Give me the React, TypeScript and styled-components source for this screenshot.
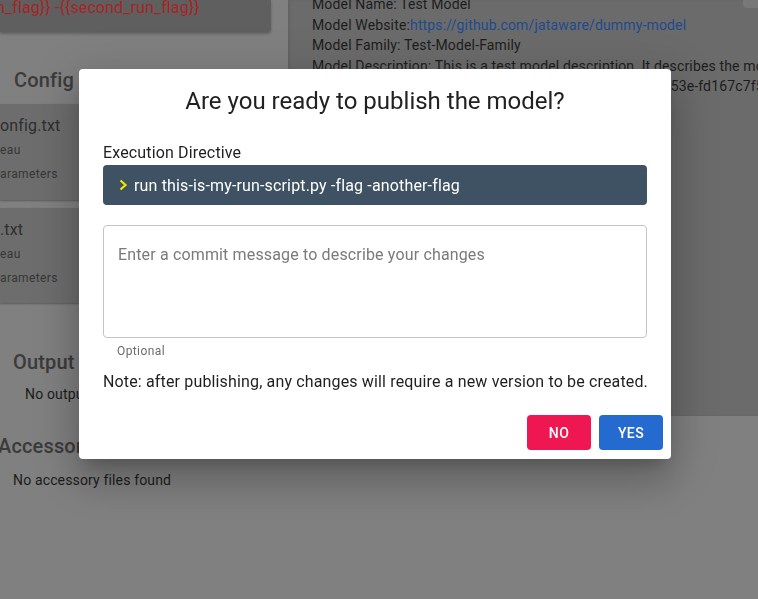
import React from "react";
import styled, { createGlobalStyle } from "styled-components";

const GlobalStyle = createGlobalStyle`
  html, body { margin: 0; padding: 0; }
  body {
    background: #808080;
    font-family: Roboto, "Liberation Sans", Arial, sans-serif;
    overflow: hidden;
  }
  * { box-sizing: border-box; }
`;

const Page = styled.div`
  display: grid;
  grid-template-columns: 288px 1fr;
  width: 758px;
  height: 599px;
  overflow: hidden;
`;

const LeftColumn = styled.div`
  display: flex;
  flex-direction: column;
  min-width: 0;
`;

const TopCard = styled.div`
  width: 271px;
  height: 32px;
  background: #5f5f5f;
  border-bottom-right-radius: 4px;
  box-shadow: 0 2px 3px rgba(0, 0, 0, 0.25);
  overflow: hidden;
`;

const FlagText = styled.div`
  margin: -4px 0 0 -4px;
  font-size: 16px;
  line-height: 24px;
  letter-spacing: 0.1px;
  color: #a82424;
  white-space: nowrap;
`;

const Heading = styled.div<{ $top: number; $indent: number }>`
  margin-top: ${(p) => p.$top}px;
  margin-left: ${(p) => p.$indent}px;
  font-size: 20px;
  font-weight: 500;
  line-height: 28px;
  letter-spacing: 0.15px;
  color: #3b3b3b;
  white-space: nowrap;
`;

const CardList = styled.div`
  display: flex;
  flex-direction: column;
  gap: 8px;
  margin-top: 10px;
`;

const FileCard = styled.div<{ $h: number }>`
  width: 271px;
  height: ${(p) => p.$h}px;
  background: #6d6d6d;
  border-radius: 0 4px 4px 0;
  box-shadow: 0 1px 2px rgba(0, 0, 0, 0.3);
  padding-top: 10px;
`;

const FileName = styled.div`
  font-size: 16px;
  line-height: 24px;
  letter-spacing: 0.15px;
  color: #2f2f2f;
`;

const FileMeta = styled.div`
  font-size: 12px;
  line-height: 24px;
  letter-spacing: 0.4px;
  color: #363636;
`;

const Body = styled.div<{ $top: number; $indent: number }>`
  margin-top: ${(p) => p.$top}px;
  padding-left: ${(p) => p.$indent}px;
  font-size: 14px;
  line-height: 20px;
  letter-spacing: 0.15px;
  color: #1c1c1c;
  white-space: nowrap;
`;

const RightPanel = styled.div`
  height: 416px;
  background: #6b6b6b;
  box-shadow: inset 2px 0 3px rgba(0, 0, 0, 0.08);
  display: grid;
  grid-template-columns: minmax(0, 1fr);
  grid-template-rows: auto;
  padding-left: 24px;
  overflow: hidden;
  & > * {
    grid-area: 1 / 1;
  }
`;

const InfoList = styled.div`
  margin-top: -6px;
  display: flex;
  flex-direction: column;
  min-width: 0;
  overflow: hidden;
`;

const InfoLine = styled.div`
  font-size: 14px;
  line-height: 20.5px;
  letter-spacing: 0.15px;
  color: #1d1d1d;
  white-space: nowrap;
`;

const Link = styled.span`
  color: #1e4a8e;
`;

const CornerButton = styled.div`
  justify-self: end;
  align-self: start;
  width: 15px;
  height: 8px;
  background: #787878;
  border-bottom-left-radius: 4px;
`;

const ModalLayer = styled.div`
  position: fixed;
  inset: 0;
  display: flex;
  align-items: flex-start;
  justify-content: flex-start;
  padding: 69px 0 0 79px;
`;

const Dialog = styled.div`
  width: 592px;
  height: 390px;
  background: #ffffff;
  border-radius: 4px;
  box-shadow: 0px 11px 15px -7px rgba(0, 0, 0, 0.2),
    0px 24px 38px 3px rgba(0, 0, 0, 0.14), 0px 9px 46px 8px rgba(0, 0, 0, 0.12);
  display: flex;
  flex-direction: column;
  overflow: hidden;
`;

const Title = styled.h2`
  margin: 0;
  padding: 16px 24px;
  font-size: 24px;
  font-weight: 400;
  line-height: 32px;
  text-align: center;
  color: #212121;
`;

const Content = styled.div`
  padding: 8px 24px 0;
  display: flex;
  flex-direction: column;
`;

const Label = styled.div`
  font-size: 16px;
  line-height: 24px;
  letter-spacing: 0.15px;
  color: #1f1f1f;
`;

const CodeBox = styled.div`
  height: 40px;
  border-radius: 4px;
  background: #3e5263;
  display: flex;
  align-items: center;
  gap: 6px;
  padding-left: 16px;
  color: #ffffff;
  font-size: 16px;
  letter-spacing: 0.15px;
`;

const Prompt = styled.svg`
  width: 9px;
  height: 12px;
  flex: none;
`;

const TextArea = styled.textarea`
  margin-top: 20px;
  height: 113px;
  resize: none;
  border: 1px solid #c4c4c4;
  border-radius: 4px;
  padding: 17px 14px;
  font-family: Roboto, "Liberation Sans", Arial, sans-serif;
  font-size: 16px;
  line-height: 23px;
  letter-spacing: 0.15px;
  color: #222;
  outline: none;
  &::placeholder {
    color: #7a7a7a;
  }
`;

const Helper = styled.div`
  margin: 4px 14px 0;
  font-size: 12px;
  line-height: 18px;
  letter-spacing: 0.4px;
  color: #6b6b6b;
`;

const Note = styled.p`
  margin: 10px 0 0;
  font-size: 16px;
  line-height: 24px;
  letter-spacing: 0.15px;
  white-space: nowrap;
  color: #1f1f1f;
`;

const Actions = styled.div`
  margin-top: auto;
  padding: 8px 8px 9px;
  display: flex;
  justify-content: flex-end;
  gap: 8px;
`;

const ActionButton = styled.button<{ $tone: "no" | "yes" }>`
  width: 64px;
  height: 35px;
  border: none;
  border-radius: 4px;
  background: ${(p) => (p.$tone === "no" ? "#ef1752" : "#256bcf")};
  color: #ffffff;
  font-family: Roboto, "Liberation Sans", Arial, sans-serif;
  font-size: 14px;
  font-weight: 500;
  letter-spacing: 0.4px;
  text-transform: uppercase;
  cursor: pointer;
`;

export default function App() {
  return (
    <>
      <GlobalStyle />
      <Page>
        <LeftColumn>
          <TopCard>
            <FlagText>n_flag{"}}"} -{"{{"}second_run_flag{"}}"}</FlagText>
          </TopCard>
          <Heading $top={34} $indent={14}>Config</Heading>
          <CardList>
            <FileCard $h={96}>
              <FileName>onfig.txt</FileName>
              <FileMeta>eau</FileMeta>
              <FileMeta>arameters</FileMeta>
            </FileCard>
            <FileCard $h={95}>
              <FileName>.txt</FileName>
              <FileMeta>eau</FileMeta>
              <FileMeta>arameters</FileMeta>
            </FileCard>
          </CardList>
          <Heading $top={45} $indent={13}>Output</Heading>
          <Body $top={8} $indent={25}>No output files found</Body>
          <Heading $top={28} $indent={-2}>Accessory Files</Heading>
          <Body $top={10} $indent={13}>No accessory files found</Body>
        </LeftColumn>
        <RightPanel>
          <InfoList>
            <InfoLine>Model Name: Test Model</InfoLine>
            <InfoLine>
              Model Website:<Link>https://github.com/jataware/dummy-model</Link>
            </InfoLine>
            <InfoLine>Model Family: Test-Model-Family</InfoLine>
            <InfoLine>
              Model Description: This is a test model description. It describes the model
            </InfoLine>
            <InfoLine>
              Model Registry Version Identifier: 8d2f0b6a-3c71-4e95-b53e-fd167c7f5a19
            </InfoLine>
          </InfoList>
          <CornerButton />
        </RightPanel>
      </Page>
      <ModalLayer>
        <Dialog>
          <Title>Are you ready to publish the model?</Title>
          <Content>
            <Label>Execution Directive</Label>
            <CodeBox>
              <Prompt viewBox="0 0 9 12">
                <path d="M1.5 1.5 L6.5 6 L1.5 10.5" fill="none" stroke="#f2e600" strokeWidth="2.2" />
              </Prompt>
              <span>run this-is-my-run-script.py -flag -another-flag</span>
            </CodeBox>
            <TextArea placeholder="Enter a commit message to describe your changes" />
            <Helper>Optional</Helper>
            <Note>Note: after publishing, any changes will require a new version to be created.</Note>
          </Content>
          <Actions>
            <ActionButton $tone="no">No</ActionButton>
            <ActionButton $tone="yes">Yes</ActionButton>
          </Actions>
        </Dialog>
      </ModalLayer>
    </>
  );
}
